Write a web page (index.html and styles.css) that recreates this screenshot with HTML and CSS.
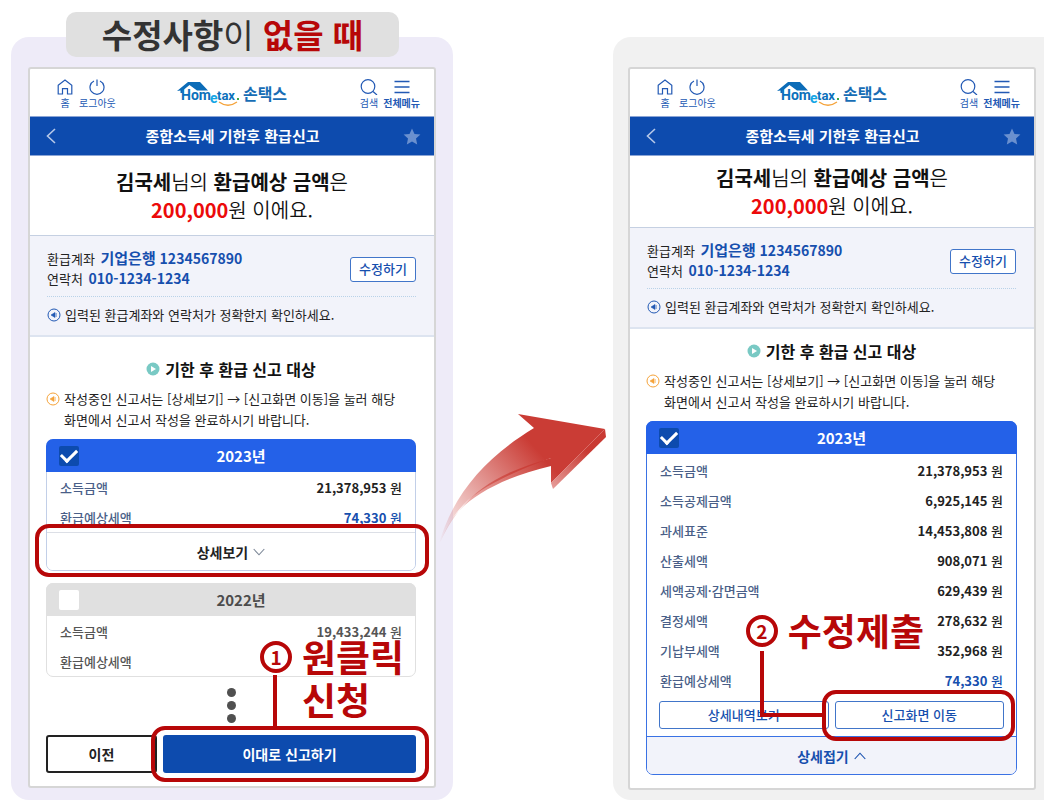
FILE: index.html
```html
<!DOCTYPE html>
<html lang="ko">
<head>
<meta charset="utf-8">
<meta name="viewport" content="width=device-width, initial-scale=1">
<title>종합소득세 기한후 환급신고</title>
<link rel="stylesheet" href="styles.css">
</head>
<body>
<svg class="defs" aria-hidden="true">
  <symbol id="i-home" viewBox="0 0 16 16"><path d="M1.2 6.3 8 1l6.800 5.300V15H10.500V9.600H5.500V15H1.200Z" fill="none" stroke="currentColor" stroke-width="1.200"/></symbol>
  <symbol id="i-power" viewBox="0 0 16 16"><path d="M5 2A7 7 0 1 0 11 2M8 .5V7" fill="none" stroke="currentColor" stroke-width="1.200"/></symbol>
  <symbol id="i-search" viewBox="0 0 18 16"><circle cx="8" cy="7.500" r="6.800" fill="none" stroke="currentColor" stroke-width="1.200"/><path d="m13 12.500 4 3.500" stroke="currentColor" stroke-width="1.200"/></symbol>
  <symbol id="i-menu" viewBox="0 0 16 16"><path d="M.5 2.500h15M.5 8h15M.5 13.500h15" stroke="currentColor" stroke-width="1.300"/></symbol>
  <symbol id="i-back" viewBox="0 0 10 16"><path d="M9 1 1.500 8 9 15" fill="none" stroke="currentColor" stroke-width="1.600"/></symbol>
  <symbol id="i-star" viewBox="0 0 18 17"><path d="m9 .5 2.500 5.400 5.900.7-4.400 4 1.200 5.900L9 13.600l-5.200 2.900L5 10.600l-4.400-4 5.900-.7Z" fill="currentColor"/></symbol>
  <symbol id="i-note" viewBox="0 0 14 14"><circle cx="7" cy="7" r="6" fill="none" stroke="currentColor"/><path d="M4 7 8 4.500v5ZM9.200 5v4" fill="currentColor" stroke="currentColor" stroke-width=".6"/></symbol>
  <symbol id="i-play" viewBox="0 0 14 14"><circle cx="7" cy="7" r="6.500" fill="#79c9c4"/><path d="m5 4 5 3-5 3Z" fill="#fff"/></symbol>
  <symbol id="i-down" viewBox="0 0 12 8"><path d="m.7 1 5.300 5.800L11.300 1" fill="none" stroke="currentColor" stroke-width="1.100"/></symbol>
  <symbol id="i-up" viewBox="0 0 12 8"><path d="M.7 7 6 1.200 11.300 7" fill="none" stroke="currentColor" stroke-width="1.100"/></symbol>
</svg>

<main class="guide">
  <section class="panel panel-before">
    <h1 class="caption"><b>수정사항</b>이 <b class="em">없을 때</b></h1>
    <article class="phone">
      <header class="top">
        <nav class="tools">
          <a class="tool" href="#"><svg width="16" height="16"><use href="#i-home"/></svg>홈</a>
          <a class="tool" href="#"><svg width="16" height="16"><use href="#i-power"/></svg>로그아웃</a>
        </nav>
        <a class="brand" href="#">
          <svg width="64" height="28" viewBox="0 0 64 28">
            <path d="M0 10 11 1h12l8 8.500H20L12.500 4 5.500 9.700V12H3.500V9.500Z" fill="#0b6cb8"/>
            <text x="4" y="19" class="logo-home">Hom</text>
            <text x="33" y="22" class="logo-e">e</text>
            <text x="40" y="19" class="logo-tax">tax</text>
            <rect x="60" y="17" width="2" height="2" fill="#3aa64a"/>
            <path d="M42 21q9 6.500 18 0" fill="none" stroke="#f5a33a" stroke-width="1.300"/>
          </svg>
          <span>손택스</span>
        </a>
        <nav class="tools tools-end">
          <a class="tool" href="#"><svg width="18" height="16"><use href="#i-search"/></svg>검색</a>
          <a class="tool strong" href="#"><svg width="16" height="16"><use href="#i-menu"/></svg>전체메뉴</a>
        </nav>
      </header>
      <div class="bar">
        <button class="icon-btn back" aria-label="뒤로"><svg width="10" height="16"><use href="#i-back"/></svg></button>
        <h2>종합소득세 기한후 환급신고</h2>
        <button class="icon-btn star" aria-label="즐겨찾기"><svg width="18" height="17"><use href="#i-star"/></svg></button>
      </div>
      <p class="hero"><b>김국세</b>님의 <b>환급예상 금액</b>은<br><b class="sum">200,000</b>원 이에요.</p>
      <section class="account">
        <div class="account-row">
          <div class="account-text">
            <p>환급계좌 <b><span class="bank">기업은행</span> 1234567890</b></p>
            <p>연락처 <b>010-1234-1234</b></p>
          </div>
          <button class="edit">수정하기</button>
        </div>
        <p class="note note-blue"><svg width="14" height="14"><use href="#i-note"/></svg><span>입력된 환급계좌와 연락처가 정확한지 확인하세요.</span></p>
      </section>
      <section class="content">
        <h3><svg width="14" height="14"><use href="#i-play"/></svg>기한 후 환급 신고 대상</h3>
        <p class="note note-orange"><svg width="14" height="14"><use href="#i-note"/></svg><span>작성중인 신고서는 [상세보기] → [신고화면 이동]을 눌러 해당 화면에서 신고서 작성을 완료하시기 바랍니다.</span></p>
        <div class="card">
          <label class="card-head"><input type="checkbox" checked><span>2023년</span></label>
          <table>
            <tr><th>소득금액</th><td>21,378,953 <i>원</i></td></tr>
            <tr class="result"><th>환급예상세액</th><td>74,330 <i>원</i></td></tr>
          </table>
          <div class="marked">
            <button class="toggle">상세보기 <svg width="12" height="8"><use href="#i-down"/></svg></button>
            <span class="ring ring-toggle"></span>
          </div>
        </div>
        <div class="card card-muted">
          <label class="card-head"><input type="checkbox"><span>2022년</span></label>
          <table>
            <tr><th>소득금액</th><td>19,433,244 <i>원</i></td></tr>
            <tr><th>환급예상세액</th><td></td></tr>
          </table>
        </div>
        <div class="dots"><i></i><i></i><i></i></div>
        <div class="actions">
          <button class="prev">이전</button>
          <div class="marked">
            <button class="submit">이대로 신고하기</button>
            <span class="ring ring-submit"></span>
            <span class="stem stem-one"></span>
            <div class="callout callout-one"><span class="num">1</span><strong>원클릭<br>신청</strong></div>
          </div>
        </div>
      </section>
    </article>
  </section>

  <div class="between">
    <svg class="arrow" viewBox="0 0 168 134" aria-hidden="true">
      <defs>
        <linearGradient id="face" gradientUnits="userSpaceOnUse" x1="2" y1="130" x2="103" y2="40">
          <stop offset="0" stop-color="#ca3c35" stop-opacity="0"/>
          <stop offset=".3" stop-color="#ca3c35" stop-opacity=".3"/>
          <stop offset="1" stop-color="#ca3c35"/>
        </linearGradient>
        <linearGradient id="side" gradientUnits="userSpaceOnUse" x1="2" y1="130" x2="110" y2="50">
          <stop offset="0" stop-color="#c5332c" stop-opacity="0"/>
          <stop offset=".35" stop-color="#d34a43" stop-opacity=".45"/>
          <stop offset="1" stop-color="#c83b34"/>
        </linearGradient>
        <linearGradient id="tip" gradientUnits="userSpaceOnUse" x1="113" y1="76" x2="150" y2="38">
          <stop offset="0" stop-color="#e7a19e"/><stop offset="1" stop-color="#c93a33"/>
        </linearGradient>
      </defs>
      <path d="M0 133C24 78 58 60 113 44v8C66 63 31 82 15 104 8 114 4 124 0 133Z" fill="url(#side)"/>
      <path d="M0 133C14 82 45 45 96 14L80 0l87 15-54 54V44C65 62 31 78 15 104 8 115 4 125 0 133Z" fill="url(#face)"/>
      <path d="m113 69 54-54 1 8-53 52Z" fill="url(#tip)"/>
    </svg>
  </div>

  <section class="panel panel-after">
    <article class="phone phone-compact">
      <header class="top">
        <nav class="tools">
          <a class="tool" href="#"><svg width="16" height="16"><use href="#i-home"/></svg>홈</a>
          <a class="tool" href="#"><svg width="16" height="16"><use href="#i-power"/></svg>로그아웃</a>
        </nav>
        <a class="brand" href="#">
          <svg width="64" height="28" viewBox="0 0 64 28">
            <path d="M0 10 11 1h12l8 8.500H20L12.500 4 5.500 9.700V12H3.500V9.500Z" fill="#0b6cb8"/>
            <text x="4" y="19" class="logo-home">Hom</text>
            <text x="33" y="22" class="logo-e">e</text>
            <text x="40" y="19" class="logo-tax">tax</text>
            <rect x="60" y="17" width="2" height="2" fill="#3aa64a"/>
            <path d="M42 21q9 6.500 18 0" fill="none" stroke="#f5a33a" stroke-width="1.300"/>
          </svg>
          <span>손택스</span>
        </a>
        <nav class="tools tools-end">
          <a class="tool" href="#"><svg width="18" height="16"><use href="#i-search"/></svg>검색</a>
          <a class="tool strong" href="#"><svg width="16" height="16"><use href="#i-menu"/></svg>전체메뉴</a>
        </nav>
      </header>
      <div class="bar">
        <button class="icon-btn back" aria-label="뒤로"><svg width="10" height="16"><use href="#i-back"/></svg></button>
        <h2>종합소득세 기한후 환급신고</h2>
        <button class="icon-btn star" aria-label="즐겨찾기"><svg width="18" height="17"><use href="#i-star"/></svg></button>
      </div>
      <p class="hero"><b>김국세</b>님의 <b>환급예상 금액</b>은<br><b class="sum">200,000</b>원 이에요.</p>
      <section class="account">
        <div class="account-row">
          <div class="account-text">
            <p>환급계좌 <b><span class="bank">기업은행</span> 1234567890</b></p>
            <p>연락처 <b>010-1234-1234</b></p>
          </div>
          <button class="edit">수정하기</button>
        </div>
        <p class="note note-blue"><svg width="14" height="14"><use href="#i-note"/></svg><span>입력된 환급계좌와 연락처가 정확한지 확인하세요.</span></p>
      </section>
      <section class="content">
        <h3><svg width="14" height="14"><use href="#i-play"/></svg>기한 후 환급 신고 대상</h3>
        <p class="note note-orange"><svg width="14" height="14"><use href="#i-note"/></svg><span>작성중인 신고서는 [상세보기] → [신고화면 이동]을 눌러 해당 화면에서 신고서 작성을 완료하시기 바랍니다.</span></p>
        <div class="card card-open">
          <label class="card-head"><input type="checkbox" checked><span>2023년</span></label>
          <table>
            <tr><th>소득금액</th><td>21,378,953 <i>원</i></td></tr>
            <tr><th>소득공제금액</th><td>6,925,145 <i>원</i></td></tr>
            <tr><th>과세표준</th><td>14,453,808 <i>원</i></td></tr>
            <tr><th>산출세액</th><td>908,071 <i>원</i></td></tr>
            <tr><th>세액공제·감면금액</th><td>629,439 <i>원</i></td></tr>
            <tr><th>결정세액</th><td>278,632 <i>원</i></td></tr>
            <tr><th>기납부세액</th><td>352,968 <i>원</i></td></tr>
            <tr class="result"><th>환급예상세액</th><td>74,330 <i>원</i></td></tr>
          </table>
          <div class="pair">
            <button class="outline">상세내역보기</button>
            <div class="marked">
              <button class="outline">신고화면 이동</button>
              <span class="ring ring-move"></span>
              <span class="stem stem-two"></span>
              <div class="callout callout-two"><span class="num">2</span><strong>수정제출</strong></div>
            </div>
          </div>
          <button class="toggle">상세접기 <svg width="12" height="8"><use href="#i-up"/></svg></button>
        </div>
      </section>
    </article>
  </section>
</main>
</body>
</html>
```
FILE: styles.css
```css
* { box-sizing: border-box; }

body {
  margin: 0;
  background: #fff;
  color: #222;
  font: 13px/20px "Noto Sans CJK KR", "Noto Sans", sans-serif;
}

h1, h2, h3, p { margin: 0; font-weight: 400; }
b, strong { font-weight: 700; }
i { font-style: normal; }
a { color: inherit; text-decoration: none; }
svg { display: block; flex: none; }
button { margin: 0; padding: 0; font: inherit; color: inherit; background: none; border: 0; cursor: pointer; }
.defs { position: absolute; width: 0; height: 0; }

.guide {
  display: grid;
  grid-template-columns: minmax(0, 442fr) minmax(0, 160fr) minmax(0, 431fr);
  padding: 37px 0 0 11px;
}

.panel { position: relative; }
.panel-before { padding: 30px 17px 12px; background: #eeebf8; border-radius: 18px; }
.panel-after { padding: 30px 8px 10px 15px; background: #f1f1f1; border-radius: 18px 0 0 18px; }

.caption {
  position: absolute;
  top: -25px;
  left: 55px;
  right: 54px;
  border-radius: 10px;
  background: #e0e0e0;
  color: #333;
  font-size: 33px;
  line-height: 45px;
  text-align: center;
  white-space: nowrap;
}
.em { color: #b70708; }

.phone { border: 2px solid #d6d6d6; border-radius: 3px; background: #fff; }

.top { display: grid; grid-template-columns: 1fr auto 1fr; height: 47px; padding-top: 10px; }
.tools { display: flex; align-items: flex-start; gap: 6px; padding-left: 27px; color: #2259b4; }
.tools-end { justify-content: flex-end; gap: 5px; padding: 0 14px 0 0; }
.tool { display: flex; flex-direction: column; align-items: center; gap: 1px; font-size: 10px; line-height: 14px; white-space: nowrap; }
.strong { font-weight: 700; }
.brand { display: flex; align-items: flex-start; gap: 2px; color: #176db5; font-size: 16px; font-weight: 700; line-height: 28px; }
.brand svg { margin-top: 2px; }
.logo-home { font: 700 14px Roboto, sans-serif; fill: #0b70bb; }
.logo-tax { font: 700 13px Roboto, sans-serif; fill: #0b70bb; }
.logo-e { font: 700 14px Roboto, sans-serif; fill: #16a5e5; }

.bar { display: flex; align-items: center; justify-content: space-between; height: 40px; padding: 0 13px 0 16px; border-top: 1px solid #8ba5d6; border-bottom: 1px solid #8ba5d6; background: #0d4bae; color: #fff; }
.bar h2 { font-size: 15px; font-weight: 700; line-height: 24px; }
.icon-btn { color: #b6c8e8; }
.back { padding-right: 6px; }
.star { color: #6a90cf; }

.hero { padding: 12px 0 11px; border-bottom: 1px solid #c5d0e2; color: #111; font-size: 20px; font-weight: 350; line-height: 28px; text-align: center; }
.phone-compact .hero { padding: 8px 0 7px; }
.sum { color: #ec0a0a; }

.account { padding: 13px 18px 10px 17px; border-bottom: 2px solid #dde4f0; background: #f2f3fa; }
.account-row { display: flex; align-items: center; justify-content: space-between; padding-bottom: 7px; border-bottom: 1px dotted #b9d2e8; }
.account-text { font-weight: 500; }
.account-text b { margin-left: 2px; color: #164fae; font-size: 14px; line-height: 16px; }
.account-text .bank { font-size: 15px; line-height: 16px; }
.edit { width: 66px; height: 25px; border: 1px solid #4175c9; border-radius: 3px; background: #fff; color: #164fae; font-weight: 500; }

.note { display: flex; gap: 4px; line-height: 21px; word-break: keep-all; }
.note svg { margin-top: 4px; }
.note-blue { padding-top: 7px; }
.note-blue svg { color: #2259b4; }
.note-orange svg { color: #f5a33a; }

.content { padding: 20px 18px 13px 16px; }
.phone-compact .content { padding: 10px 17px 13px 16px; }
.content h3 { display: flex; align-items: center; justify-content: center; gap: 5px; color: #111; font-size: 16px; font-weight: 700; line-height: 24px; }
.note-orange { padding: 7px 0 9px; }

.card { border: 1px solid #c2cfe8; border-radius: 7px; background: #fff; }
.card-head { display: flex; align-items: center; height: 33px; margin: -1px -1px 0; padding: 0 13px; border-radius: 7px 7px 0 0; background: #2461e8; color: #fff; font-size: 15px; font-weight: 700; }
.card-head span { flex: 1; text-align: center; }
.card-head input { display: grid; place-content: center; appearance: none; width: 20px; height: 20px; margin: 0; border-radius: 2px; background: #fff; }
.card-head input:checked { background: #0d4bae; }
.card-head input:checked::before { content: ""; width: 13px; height: 7px; margin-bottom: 4px; border: solid #fff; border-width: 0 0 3px 3px; transform: rotate(-45deg); }

table { width: 100%; border-collapse: collapse; }
th, td { height: 30px; padding: 2px 13px 0; white-space: nowrap; }
th { color: #4a5f88; font-weight: 500; text-align: left; }
td { color: #222; font-weight: 700; text-align: right; }
td i { font-weight: 500; }
.result td { color: #164fae; }

.marked { position: relative; }
.toggle { display: flex; align-items: center; justify-content: center; gap: 5px; width: 100%; height: 38px; border-top: 1px solid #dcdfe6; border-radius: 0 0 6px 6px; background: #fff; color: #222; font-size: 14px; font-weight: 700; }
.toggle svg { color: #7c8797; }

.card-muted { margin-top: 12px; border-color: #e0e0e0; }
.card-muted .card-head { background: #e0e0e0; color: #4c4c4c; }
.card-muted th, .card-muted td { color: #555; }

.card-open { border-color: #3a72e4; }
.card-open table { margin-top: 1px; }
.card-open .toggle { border-top-color: #3a72e4; background: #f2f3fa; color: #164fae; }
.card-open .toggle svg { color: #164fae; }
.pair { display: grid; grid-template-columns: 1fr 1fr; gap: 6px; padding: 6px 12px 7px; }
.outline { width: 100%; height: 28px; border: 1px solid #4175c9; border-radius: 3px; background: #fff; color: #164fae; font-weight: 500; }

.dots { display: flex; flex-direction: column; align-items: center; gap: 4px; padding: 11px 0 12px; }
.dots i { width: 9px; height: 9px; border-radius: 50%; background: #505050; }

.actions { display: grid; grid-template-columns: 111fr 253fr; gap: 6px; font-size: 14px; font-weight: 700; }
.prev { height: 38px; border: 2px solid #222; border-radius: 3px; }
.submit { width: 100%; height: 38px; border-radius: 3px; background: #0d4bae; color: #fff; }

/* Step markers drawn over the screens */
.ring { position: absolute; z-index: 1; border: 4px solid #b70708; border-radius: 14px; pointer-events: none; }
.ring-toggle { inset: -8px -14px -7px -12px; }
.ring-submit { inset: -9px -13px -9px -12px; }
.ring-move { inset: -11px -11px -12px -13px; }
.stem { position: absolute; z-index: 1; pointer-events: none; }
.stem-one { left: 110px; bottom: 46px; height: 52px; border-left: 4px solid #b70708; }
.stem-two { right: calc(100% + 12px); bottom: 12px; width: 63px; height: 66px; border: solid #b70708; border-width: 0 0 4px 4px; }
.callout { position: absolute; z-index: 2; display: flex; gap: 10px; color: #b70708; font-size: 37px; line-height: 43px; white-space: nowrap; pointer-events: none; }
.callout strong { text-shadow: 1px 0 #fff, -1px 0 #fff, 0 1px #fff, 0 -1px #fff; }
.callout-one { left: 97px; bottom: 52px; }
.callout-two { right: 80px; bottom: 77px; }
.num { width: 32px; height: 32px; margin-top: 6px; border: 4px solid #b70708; border-radius: 50%; background: #fff; font-size: 19px; font-weight: 700; line-height: 24px; text-align: center; }

.between { position: relative; }
.arrow { position: absolute; top: 377px; left: -15px; width: calc(100% + 8px); overflow: visible; }
```
